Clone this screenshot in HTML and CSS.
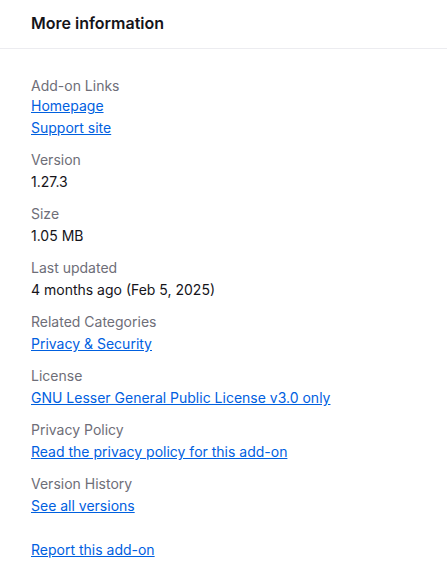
FILE: index.html
```html
<!DOCTYPE html>
<html lang="en">
<head>
<meta charset="utf-8">
<link rel="stylesheet" href="styles.css">
</head>
<body>
<section class="card">
  <header class="card-header"><h2 class="card-title">More information</h2></header>
  <div class="card-body">
    <dl class="details">
      <div class="item">
        <dt>Add-on Links</dt>
        <dd>
          <ul class="links">
            <li><a href="#">Homepage</a></li>
            <li><a href="#">Support site</a></li>
          </ul>
        </dd>
      </div>
      <div class="item"><dt>Version</dt><dd>1.27.3</dd></div>
      <div class="item"><dt>Size</dt><dd>1.05 MB</dd></div>
      <div class="item"><dt>Last updated</dt><dd>4 months ago (Feb 5, 2025)</dd></div>
      <div class="item"><dt>Related Categories</dt><dd><a href="#">Privacy &amp; Security</a></dd></div>
      <div class="item"><dt>License</dt><dd><a href="#">GNU Lesser General Public License v3.0 only</a></dd></div>
      <div class="item"><dt>Privacy Policy</dt><dd><a href="#">Read the privacy policy for this add-on</a></dd></div>
      <div class="item"><dt>Version History</dt><dd><a href="#">See all versions</a></dd></div>
    </dl>
    <a class="report" href="#">Report this add-on</a>
  </div>
</section>
</body>
</html>
```
FILE: styles.css
```css
html, body {
  margin: 0;
  padding: 0;
  background: #ffffff;
}
body {
  font-family: Inter, "Noto Sans", sans-serif;
  color: #15141a;
  font-size: 14px;
}
.card {
  width: 447px;
}
.card-header {
  padding: 11px 31px 13px;
  border-bottom: 1px solid #ececf0;
}
.card-title {
  margin: 0;
  font-size: 16px;
  font-weight: 600;
  line-height: 24px;
}
.card-body {
  padding: 26px 31px 20px;
}
.details {
  margin: 0;
  display: flex;
  flex-direction: column;
  gap: 10px;
}
.item dt {
  color: #6e6e78;
  line-height: 22px;
}
.item dd {
  margin: 0;
  line-height: 22px;
}
.links {
  list-style: none;
  margin: -2px 0 0;
  padding: 0;
}
a {
  color: #0060df;
  text-decoration: underline;
}
.report {
  display: inline-block;
  margin-top: 22px;
  line-height: 22px;
}
```
